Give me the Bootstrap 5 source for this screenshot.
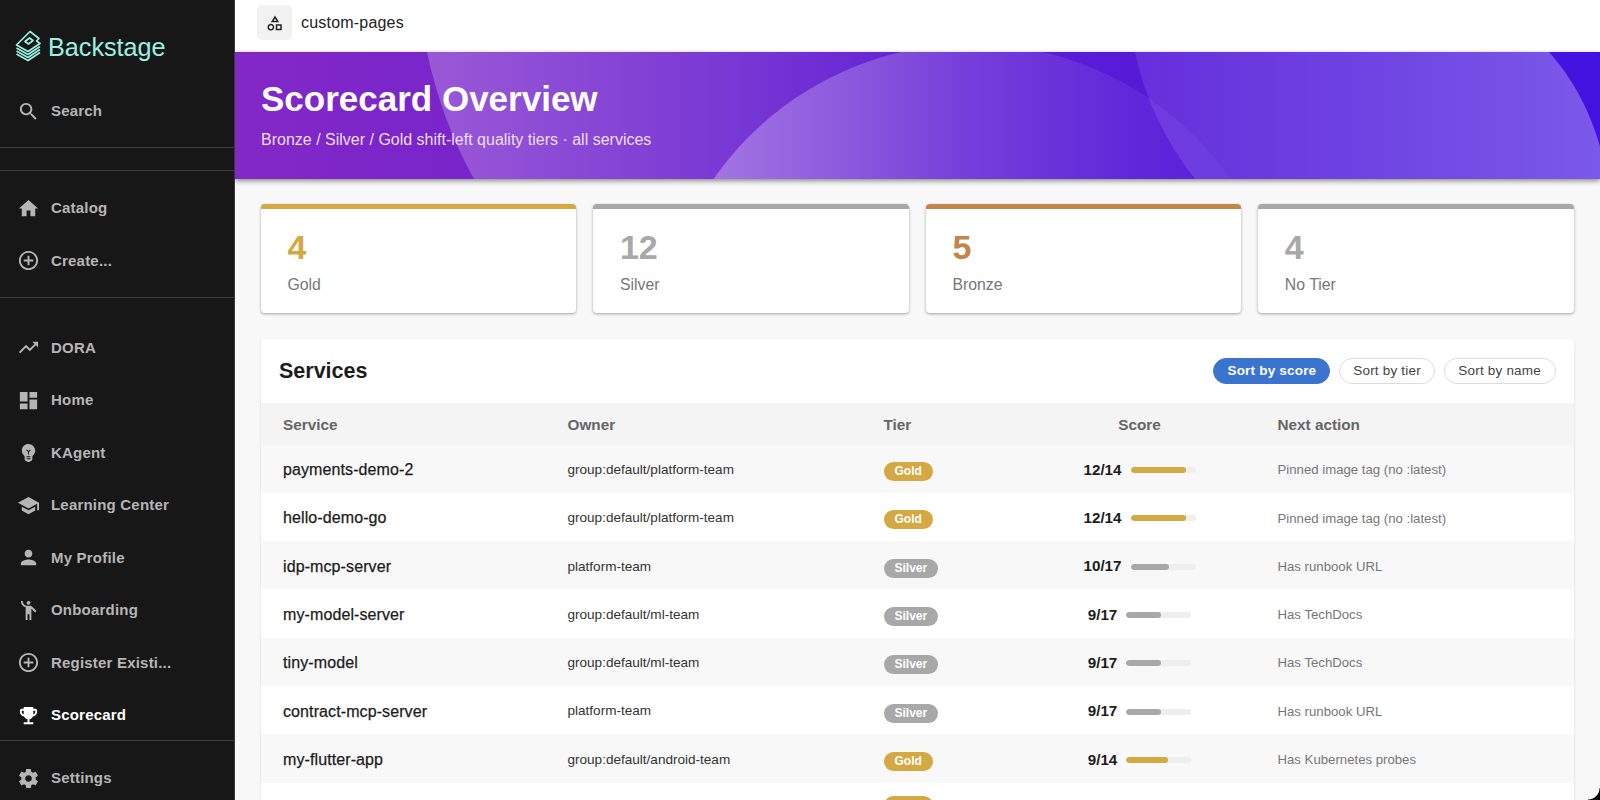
<!DOCTYPE html>
<html lang="en">
<head>
<meta charset="utf-8">
<title>Scorecard Overview</title>
<link href="https://cdn.jsdelivr.net/npm/bootstrap@5.3.0/dist/css/bootstrap.min.css" rel="stylesheet">
<style>
html,body{height:100%;overflow:hidden}
body{font-family:"Liberation Sans",Arial,sans-serif;background:#f8f8f8;color:#1c1c1c}
.shell{height:800px;overflow:hidden;position:relative}
.side{width:234.5px;flex:0 0 234.5px;background:#171717;border-right:1px solid #3a3a3a;height:800px;overflow:hidden}
.logo-wrap{height:85px;padding:30px 0 0 15px;gap:6px;flex-shrink:0}
.logo-text{font-size:25.2px;line-height:34px;color:#9bf0e1}
.nav-row{height:52.5px;flex-shrink:0;padding-left:17px;gap:11px;color:#b5b5b5;font-size:15px;font-weight:700;letter-spacing:.2px;text-decoration:none}
.nav-row svg{width:23px;height:23px;fill:currentColor;flex:0 0 23px}
.nav-row.on{color:#fff}
.rule{height:1px;background:#3a3a3a;flex-shrink:0}
.g1{margin-top:9.5px}.g2{margin-top:22px}.g3{margin-top:11px}.g4{margin-top:10px}.g5{margin-top:23.5px}.g6{margin-top:-1.5px}.g7{margin-top:11px}
.main-col{min-width:0;height:800px;overflow:hidden}
.topbar{height:52px;background:#fff;padding:0 0 7px 22.5px;gap:9px;font-size:16px;letter-spacing:.2px;color:#222}
.cat-box{width:35px;height:35px;background:#f2f2f2;border-radius:5px}
.cat-box svg{width:18px;height:18px;fill:#222;transform:scaleX(-1)}
.hero{height:126.5px;background:linear-gradient(90deg,#8328c6 0%,#5a1cd6 60%,#4312e0 100%);box-shadow:0 2px 5px rgba(0,0,0,.45);position:relative;padding:26px 26.5px 0;color:#fff;overflow:hidden}
.hero-art{position:absolute;left:0;top:0;width:1366px;height:127px}
.hero-copy{position:relative}
.hero-title{font-size:35px;line-height:42px;font-weight:700;margin:0}
.hero-sub{font-size:16px;line-height:20px;margin:10px 0 0;color:#ecdff8}
.pane{padding:25px 26.5px 0 26.5px}
.tiles{display:grid;grid-template-columns:repeat(4,1fr);gap:17.3px}
.tile{height:109px;background:#fff;border-top:5px solid #aaa;border-radius:4px;box-shadow:0 1px 3px rgba(0,0,0,.35);padding:16px 26.5px 0}
.tile-num{font-size:34px;line-height:44px;font-weight:700}
.tile-lab{font-size:15.8px;line-height:22px;color:#777;margin-top:5px}
.c-gold{color:#d4a843}.c-silver{color:#a8a8a8}.c-bronze{color:#c4854a}
.b-gold{border-top-color:#d4a843}.b-silver{border-top-color:#a8a8a8}.b-bronze{border-top-color:#c4854a}
.svc{margin-top:26px;background:#fff;border-radius:4px;box-shadow:0 1px 3px rgba(0,0,0,.12);overflow:hidden}
.svc-head{height:64px;padding:0 18px 0 18px}
.svc-title{font-size:21.5px;font-weight:700;margin:2px 0 0;color:#1c1c1c}
.pill-set{gap:8.4px}
.pill{height:26px;padding:0 13.5px;border-radius:13px;border:1px solid #ddd;background:#fff;font-size:13.5px;line-height:24px;letter-spacing:.2px;color:#444}
.pill.active{background:#3a74cf;border-color:#3a74cf;color:#fff;font-weight:700;padding:0 13px}
.svc-table{table-layout:fixed;width:100%;margin:0;--bs-table-striped-bg:#f8f8f8;--bs-table-bg:#fff}
.svc-table th,.svc-table td{border:0;padding:3px 0 0 22px;vertical-align:middle}
.svc-table thead th{height:42px;background:#f4f4f4;color:#666;font-size:15.3px;font-weight:700}
.svc-table tbody tr{height:48.3px}
.svc-table th.ctr{padding:3px 0 0;text-align:center}
.svc-table td.ctr{padding:3px 0 0}
.cw1{width:284.5px}.cw2{width:316px}.cw3{width:162px}.cw4{width:232px}
.svc-table>tbody>tr>td.svc-name{font-size:16px;letter-spacing:.1px;-webkit-text-stroke:.25px #1c1c1c;color:#1c1c1c}
.svc-table>tbody>tr>td.svc-own{font-size:13.55px;color:#333}
.svc-table>tbody>tr>td.svc-next{font-size:13.2px;color:#777}
.tier{display:inline-block;height:19px;line-height:19px;border-radius:10px;padding:0 11px;font-size:12px;font-weight:700;color:#fff;margin-top:2px}
.tier.t-gold{background:#d4a843}.tier.t-silver{background:#a8a8a8}
.tier-stub{width:49px}
.score-line{gap:9px}
.score-txt{font-size:15.2px;font-weight:700;color:#1c1c1c}
.bar-track{width:65px;height:6px;border-radius:3px;background:#eee;overflow:hidden}
.bar-fill{height:100%;border-radius:3px}
.corner{position:absolute;right:0;bottom:0;width:12px;height:12px;background:radial-gradient(circle at 0 0,transparent 11px,#000 12px)}
</style>
</head>
<body>
<div class="shell d-flex">
  <aside class="side d-flex flex-column">
    <div class="logo-wrap d-flex align-items-start">
      <svg width="27" height="33" viewBox="0 0 27 33" fill="none" stroke="#9bf0e1" stroke-width="1.7" stroke-linejoin="round"><path d="M15 1.5 24 8.5 21.5 11 25 13.5 13 21.5 1.5 15Z"/><path d="M10 11.5 14.5 8 18 10.5 13.5 14Z"/><path d="M1.5 18 13 24.5 25 16.5"/><path d="M1.5 21 13 27.5 25 19.5"/><path d="M1.5 24 13 30.5 25 22.5"/></svg>
      <span class="logo-text">Backstage</span>
    </div>
    <a class="nav-row d-flex align-items-center"><svg viewBox="0 0 24 24"><path d="M15.5 14h-.79l-.28-.27C15.41 12.59 16 11.11 16 9.5 16 5.91 13.09 3 9.5 3S3 5.91 3 9.5 5.91 16 9.5 16c1.61 0 3.09-.59 4.23-1.57l.27.28v.79l5 4.99L20.49 19l-4.99-5zm-6 0C7.01 14 5 11.99 5 9.5S7.01 5 9.5 5 14 7.01 14 9.5 11.99 14 9.5 14z"/></svg>Search</a>
    <div class="rule g1"></div>
    <div class="rule g2"></div>
    <a class="nav-row d-flex align-items-center g3"><svg viewBox="0 0 24 24"><path d="M10 20v-6h4v6h5v-8h3L12 3 2 12h3v8z"/></svg>Catalog</a>
    <a class="nav-row d-flex align-items-center"><svg viewBox="0 0 24 24"><path d="M13 7h-2v4H7v2h4v4h2v-4h4v-2h-4V7zm-1-5C6.48 2 2 6.48 2 12s4.48 10 10 10 10-4.48 10-10S17.52 2 12 2zm0 18c-4.41 0-8-3.59-8-8s3.59-8 8-8 8 3.59 8 8-3.59 8-8 8z"/></svg>Create...</a>
    <div class="rule g4"></div>
    <a class="nav-row d-flex align-items-center g5"><svg viewBox="0 0 24 24"><path d="M16 6l2.29 2.29-4.88 4.88-4-4L2 16.59 3.41 18l6-6 4 4 6.3-6.29L22 12V6z"/></svg>DORA</a>
    <a class="nav-row d-flex align-items-center"><svg viewBox="0 0 24 24"><path d="M3 13h8V3H3v10zm0 8h8v-6H3v6zm10 0h8V11h-8v10zm0-18v6h8V3h-8z"/></svg>Home</a>
    <a class="nav-row d-flex align-items-center"><svg viewBox="0 0 24 24"><path d="M12 3c-.46 0-.93.04-1.4.14-2.76.53-4.96 2.76-5.48 5.52-.48 2.61.48 5.01 2.22 6.56.43.38.66.91.66 1.47V19c0 1.1.9 2 2 2h.28c.35.6.98 1 1.72 1s1.38-.4 1.72-1H14c1.1 0 2-.9 2-2v-2.31c0-.55.22-1.09.64-1.46C18.09 13.95 19 12.08 19 10c0-3.87-3.13-7-7-7zm.5 11h-1v-2.59L9.67 9.59l.71-.71L12 10.5l1.62-1.62.71.71-1.83 1.83V14zm1.5 5h-4v-1h4v1zm0-2h-4v-1h4v1z"/></svg>KAgent</a>
    <a class="nav-row d-flex align-items-center"><svg viewBox="0 0 24 24"><path d="M5 13.18v4L12 21l7-3.82v-4L12 17l-7-3.82zM12 3L1 9l11 6 9-4.91V17h2V9L12 3z"/></svg>Learning Center</a>
    <a class="nav-row d-flex align-items-center"><svg viewBox="0 0 24 24"><path d="M12 12c2.21 0 4-1.79 4-4s-1.79-4-4-4-4 1.79-4 4 1.79 4 4 4zm0 2c-2.67 0-8 1.34-8 4v2h16v-2c0-2.66-5.33-4-8-4z"/></svg>My Profile</a>
    <a class="nav-row d-flex align-items-center"><svg viewBox="0 0 24 24"><circle cx="12" cy="4" r="2"/><path d="M15.89 8.11C15.5 7.72 14.83 7 13.53 7h-2.54C8.24 6.99 6 4.75 6 2H4c0 3.16 2.11 5.84 5 6.71V22h2v-6h2v6h2V10.05L18.95 14l1.41-1.41-4.47-4.48z"/></svg>Onboarding</a>
    <a class="nav-row d-flex align-items-center"><svg viewBox="0 0 24 24"><path d="M13 7h-2v4H7v2h4v4h2v-4h4v-2h-4V7zm-1-5C6.48 2 2 6.48 2 12s4.48 10 10 10 10-4.48 10-10S17.52 2 12 2zm0 18c-4.41 0-8-3.59-8-8s3.59-8 8-8 8 3.59 8 8-3.59 8-8 8z"/></svg>Register Existi...</a>
    <a class="nav-row on d-flex align-items-center"><svg viewBox="0 0 24 24"><path d="M19 5h-2V3H7v2H5c-1.1 0-2 .9-2 2v1c0 2.55 1.92 4.63 4.39 4.94.63 1.5 1.98 2.63 3.61 2.96V19H7v2h10v-2h-4v-3.1c1.63-.33 2.98-1.46 3.61-2.96C19.08 12.63 21 10.55 21 8V7c0-1.1-.9-2-2-2zM5 8V7h2v3.82C5.84 10.4 5 9.3 5 8zm14 0c0 1.3-.84 2.4-2 2.82V7h2v1z"/></svg>Scorecard</a>
    <div class="rule g6"></div>
    <a class="nav-row d-flex align-items-center g7"><svg viewBox="0 0 24 24"><path d="M19.43 12.98c.04-.32.07-.64.07-.98s-.03-.66-.07-.98l2.11-1.65c.19-.15.24-.42.12-.64l-2-3.46c-.12-.22-.39-.3-.61-.22l-2.49 1c-.52-.4-1.08-.73-1.69-.98l-.38-2.65C14.46 2.18 14.25 2 14 2h-4c-.25 0-.46.18-.49.42l-.38 2.65c-.61.25-1.17.59-1.69.98l-2.49-1c-.23-.09-.49 0-.61.22l-2 3.46c-.13.22-.07.49.12.64l2.11 1.65c-.04.32-.07.65-.07.98s.03.66.07.98l-2.11 1.65c-.19.15-.24.42-.12.64l2 3.46c.12.22.39.3.61.22l2.49-1c.52.4 1.08.73 1.69.98l.38 2.65c.03.24.24.42.49.42h4c.25 0 .46-.18.49-.42l.38-2.65c.61-.25 1.17-.59 1.69-.98l2.49 1c.23.09.49 0 .61-.22l2-3.46c.12-.22.07-.49-.12-.64l-2.11-1.65zM12 15.5c-1.93 0-3.5-1.57-3.5-3.5s1.57-3.5 3.5-3.5 3.5 1.57 3.5 3.5-1.57 3.5-3.5 3.5z"/></svg>Settings</a>
  </aside>
  <div class="main-col flex-grow-1 d-flex flex-column">
    <div class="topbar d-flex align-items-center flex-shrink-0">
      <div class="cat-box d-flex align-items-center justify-content-center"><svg viewBox="0 0 24 24"><path d="M12 2l-5.5 9h11L12 2zm0 3.84L13.93 9h-3.87L12 5.84zM17.5 13c-2.49 0-4.5 2.01-4.5 4.5s2.01 4.5 4.5 4.5 4.5-2.01 4.5-4.5-2.01-4.5-4.5-4.5zm0 7c-1.38 0-2.5-1.12-2.5-2.5s1.12-2.5 2.5-2.5 2.5 1.12 2.5 2.5-1.12 2.5-2.5 2.5zM3 21.5h8v-8H3v8zm2-6h4v4H5v-4z"/></svg></div>
      <span>custom-pages</span>
    </div>
    <header class="hero flex-shrink-0">
      <svg class="hero-art" viewBox="0 0 1366 127" aria-hidden="true">
        <defs>
          <linearGradient id="ga" gradientUnits="userSpaceOnUse" x1="190" y1="0" x2="720" y2="0"><stop offset="0" stop-color="#fff" stop-opacity=".24"/><stop offset="1" stop-color="#fff" stop-opacity="0"/></linearGradient>
          <linearGradient id="gc" gradientUnits="userSpaceOnUse" x1="478" y1="0" x2="994" y2="0"><stop offset="0" stop-color="#fff" stop-opacity=".3"/><stop offset=".65" stop-color="#fff" stop-opacity=".1"/><stop offset=".8" stop-color="#fff" stop-opacity=".06"/><stop offset="1" stop-color="#fff" stop-opacity=".03"/></linearGradient>
          <linearGradient id="gd" gradientUnits="userSpaceOnUse" x1="900" y1="0" x2="1366" y2="0"><stop offset="0" stop-color="#fff" stop-opacity=".09"/><stop offset="1" stop-color="#fff" stop-opacity=".3"/></linearGradient>
        </defs>
        <path d="M192 0Q207 70 239 127H760V0Z" fill="url(#ga)"/>
        <circle cx="737" cy="307" r="315" fill="url(#gc)"/>
        <path d="M900 0Q915 70 960 127H1366V98Q1350 40 1314 0Z" fill="url(#gd)"/>
      </svg>
      <div class="hero-copy">
        <h1 class="hero-title">Scorecard Overview</h1>
        <p class="hero-sub">Bronze / Silver / Gold shift-left quality tiers · all services</p>
      </div>
    </header>
    <main class="pane flex-grow-1">
      <section class="tiles">
        <div class="tile b-gold"><div class="tile-num c-gold">4</div><div class="tile-lab">Gold</div></div>
        <div class="tile b-silver"><div class="tile-num c-silver">12</div><div class="tile-lab">Silver</div></div>
        <div class="tile b-bronze"><div class="tile-num c-bronze">5</div><div class="tile-lab">Bronze</div></div>
        <div class="tile b-silver"><div class="tile-num c-silver">4</div><div class="tile-lab">No Tier</div></div>
      </section>
      <section class="svc">
        <div class="svc-head d-flex align-items-center justify-content-between">
          <h2 class="svc-title">Services</h2>
          <div class="d-flex pill-set">
            <button class="pill active" type="button">Sort by score</button>
            <button class="pill" type="button">Sort by tier</button>
            <button class="pill" type="button">Sort by name</button>
          </div>
        </div>
        <table class="table table-striped svc-table">
          <colgroup><col class="cw1"><col class="cw2"><col class="cw3"><col class="cw4"><col></colgroup>
          <thead><tr><th>Service</th><th>Owner</th><th>Tier</th><th class="ctr">Score</th><th>Next action</th></tr></thead>
          <tbody>
            <tr><td class="svc-name">payments-demo-2</td><td class="svc-own">group:default/platform-team</td><td><span class="tier t-gold">Gold</span></td><td class="ctr"><div class="d-flex justify-content-center align-items-center score-line"><span class="score-txt">12/14</span><div class="bar-track"><div class="bar-fill" style="width:85.7%;background:#d4a843"></div></div></div></td><td class="svc-next">Pinned image tag (no :latest)</td></tr>
            <tr><td class="svc-name">hello-demo-go</td><td class="svc-own">group:default/platform-team</td><td><span class="tier t-gold">Gold</span></td><td class="ctr"><div class="d-flex justify-content-center align-items-center score-line"><span class="score-txt">12/14</span><div class="bar-track"><div class="bar-fill" style="width:85.7%;background:#d4a843"></div></div></div></td><td class="svc-next">Pinned image tag (no :latest)</td></tr>
            <tr><td class="svc-name">idp-mcp-server</td><td class="svc-own">platform-team</td><td><span class="tier t-silver">Silver</span></td><td class="ctr"><div class="d-flex justify-content-center align-items-center score-line"><span class="score-txt">10/17</span><div class="bar-track"><div class="bar-fill" style="width:58.8%;background:#a8a8a8"></div></div></div></td><td class="svc-next">Has runbook URL</td></tr>
            <tr><td class="svc-name">my-model-server</td><td class="svc-own">group:default/ml-team</td><td><span class="tier t-silver">Silver</span></td><td class="ctr"><div class="d-flex justify-content-center align-items-center score-line"><span class="score-txt">9/17</span><div class="bar-track"><div class="bar-fill" style="width:52.9%;background:#a8a8a8"></div></div></div></td><td class="svc-next">Has TechDocs</td></tr>
            <tr><td class="svc-name">tiny-model</td><td class="svc-own">group:default/ml-team</td><td><span class="tier t-silver">Silver</span></td><td class="ctr"><div class="d-flex justify-content-center align-items-center score-line"><span class="score-txt">9/17</span><div class="bar-track"><div class="bar-fill" style="width:52.9%;background:#a8a8a8"></div></div></div></td><td class="svc-next">Has TechDocs</td></tr>
            <tr><td class="svc-name">contract-mcp-server</td><td class="svc-own">platform-team</td><td><span class="tier t-silver">Silver</span></td><td class="ctr"><div class="d-flex justify-content-center align-items-center score-line"><span class="score-txt">9/17</span><div class="bar-track"><div class="bar-fill" style="width:52.9%;background:#a8a8a8"></div></div></div></td><td class="svc-next">Has runbook URL</td></tr>
            <tr><td class="svc-name">my-flutter-app</td><td class="svc-own">group:default/android-team</td><td><span class="tier t-gold">Gold</span></td><td class="ctr"><div class="d-flex justify-content-center align-items-center score-line"><span class="score-txt">9/14</span><div class="bar-track"><div class="bar-fill" style="width:64.3%;background:#d4a843"></div></div></div></td><td class="svc-next">Has Kubernetes probes</td></tr>
            <tr><td></td><td></td><td><span class="tier t-gold tier-stub"></span></td><td></td><td></td></tr>
          </tbody>
        </table>
      </section>
    </main>
  </div>
  <div class="corner"></div>
</div>
<script src="https://cdn.jsdelivr.net/npm/bootstrap@5.3.0/dist/js/bootstrap.bundle.min.js"></script>
</body>
</html>
